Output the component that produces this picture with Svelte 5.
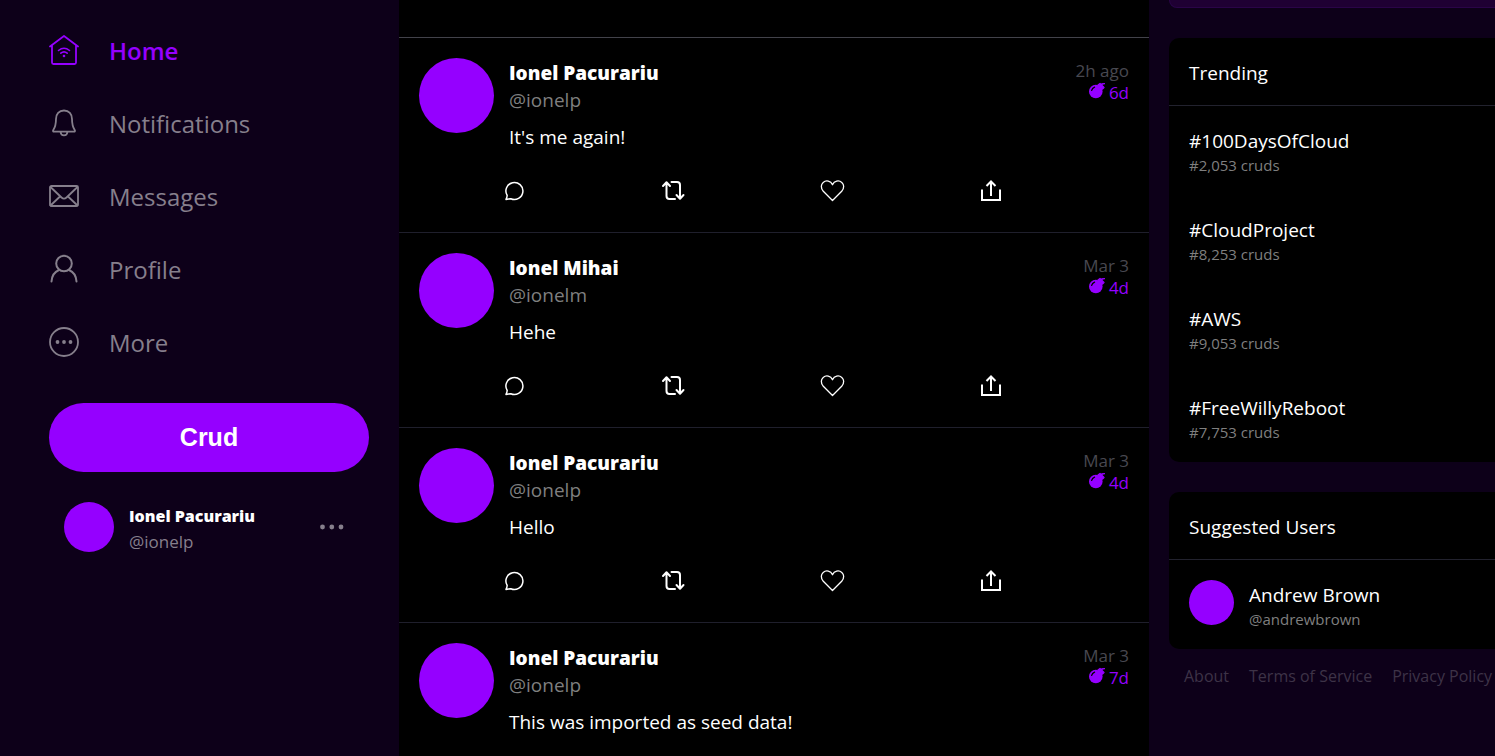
<script>
  const nav = [
    { id: 'home', label: 'Home' },
    { id: 'bell', label: 'Notifications' },
    { id: 'mail', label: 'Messages' },
    { id: 'user', label: 'Profile' },
    { id: 'more', label: 'More' }
  ];
  const posts = [
    { name: 'Ionel Pacurariu', handle: '@ionelp', text: "It's me again!", time: '2h ago', left: '6d' },
    { name: 'Ionel Mihai', handle: '@ionelm', text: 'Hehe', time: 'Mar 3', left: '4d' },
    { name: 'Ionel Pacurariu', handle: '@ionelp', text: 'Hello', time: 'Mar 3', left: '4d' },
    { name: 'Ionel Pacurariu', handle: '@ionelp', text: 'This was imported as seed data!', time: 'Mar 3', left: '7d' }
  ];
  const actions = ['reply', 'repost', 'like', 'share'];
  const trends = [
    { tag: '#100DaysOfCloud', count: '#2,053 cruds' },
    { tag: '#CloudProject', count: '#8,253 cruds' },
    { tag: '#AWS', count: '#9,053 cruds' },
    { tag: '#FreeWillyReboot', count: '#7,753 cruds' }
  ];
</script>

<div class="page">
  <aside class="sidebar">
    <nav>
      {#each nav as item}
        <a href="#{item.id}" class:active={item.id === 'home'}>
          <svg width="30" height="30" viewBox="0 0 30 30" fill="none" stroke="currentColor" stroke-width="2" stroke-linecap="round" stroke-linejoin="round" aria-hidden="true">
            {#if item.id === 'home'}
              <path stroke-width="1.800" d="M1 11.500 15 1l14 10.500M3 10v17.500Q3 29 4.500 29h21q1.500 0 1.500-1.500V10" />
              <path stroke-width="1.600" d="M9.500 15.500q5.500-4.500 11 0M11.800 18.200q3.200-2.600 6.400 0" />
              <circle cx="15" cy="21" r="1.300" fill="currentColor" stroke="none" />
            {:else if item.id === 'bell'}
              <path stroke-width="1.800" d="M15 2.500c-5 0-8 3.700-8 8.500 0 6-1 8.500-2.700 11-.6 1-.2 1.700.8 1.700h19.800c1 0 1.400-.7.8-1.700C24 19.500 23 17 23 11 23 6.200 20 2.500 15 2.500zM11.500 24c.3 2.400 1.700 3.400 3.500 3.400s3.200-1 3.500-3.400" />
            {:else if item.id === 'mail'}
              <rect x="1" y="5" width="28" height="20" rx="1.500" stroke-width="1.800" />
              <path stroke-width="1.800" d="m1.500 6 11 10.500q2.500 2.300 5 0L28.500 6M1.500 24.500l9.500-9M28.500 24.500l-9.500-9" />
            {:else if item.id === 'user'}
              <circle cx="15" cy="9.500" r="7.800" />
              <path d="M2.500 27.500c.4-6.200 3.200-9.700 7.500-11.500M27.500 27.500c-.4-6.200-3.200-9.700-7.500-11.500" />
            {:else}
              <circle cx="15" cy="15" r="14" stroke-width="1.800" />
              <g fill="currentColor" stroke="none"><circle cx="8.500" cy="15" r="1.900" /><circle cx="15" cy="15" r="1.900" /><circle cx="21.500" cy="15" r="1.900" /></g>
            {/if}
          </svg>
          <span>{item.label}</span>
        </a>
      {/each}
    </nav>
    <button class="compose">Crud</button>
    <div class="account">
      <span class="avatar small"></span>
      <div class="who">
        <strong>Ionel Pacurariu</strong>
        <span>@ionelp</span>
      </div>
      <button class="icon" aria-label="Account options">
        <svg width="24" height="6" viewBox="0 0 24 6" fill="currentColor" aria-hidden="true"><circle cx="2.500" cy="3" r="2.400" /><circle cx="11.800" cy="3" r="2.400" /><circle cx="21" cy="3" r="2.400" /></svg>
      </button>
    </div>
  </aside>

  <main>
    {#each posts as post}
      <article>
        <header>
          <span class="avatar"></span>
          <div class="body">
            <strong>{post.name}</strong>
            <span class="handle">{post.handle}</span>
            <p>{post.text}</p>
          </div>
          <div class="meta">
            <time>{post.time}</time>
            <span class="expires">
              <svg width="18" height="17" viewBox="0 0 18 17" aria-hidden="true">
                <circle cx="7.800" cy="9.500" r="6.800" fill="currentColor" />
                <path d="m10 3 2-1.500 4 4L14.500 7zM12.600 3.500l1.200-1.700 3.200-.2" fill="currentColor" stroke="currentColor" stroke-width="1.300" stroke-linejoin="round" />
                <path d="M3.600 8.500Q4.200 6 6.600 5.100" fill="none" stroke="#000" stroke-width="1.200" stroke-linecap="round" />
              </svg>
              {post.left}
            </span>
          </div>
        </header>
        <div class="actions">
          {#each actions as action}
            <button class="icon" aria-label={action}>
              <svg width="25" height="25" viewBox="0 0 25 25" fill="none" stroke="currentColor" stroke-linecap="round" stroke-linejoin="round" aria-hidden="true">
                {#if action === 'reply'}
                  <path stroke-width="1.500" d="M5.200 17.500A8.500 8.500 0 1 1 8.800 20.700L4 21.400Q5 19.500 5.200 17.500z" />
                {:else if action === 'repost'}
                  <path stroke-width="2" d="M2 8 5.500 4.300 9 8M5.500 5v13q0 3 3 3H14M10.500 4H16q3 0 3 3v13M15.500 17l3.500 3.700 3.500-3.700" />
                {:else if action === 'like'}
                  <path stroke-width="1.300" d="M12.500 22.500 3.300 13.200C.4 10 1 6.300 3.200 4.400 6.200 1.800 10.700 2.700 12.500 6.700 14.300 2.700 18.800 1.800 21.800 4.400 24 6.300 24.600 10 21.700 13.200z" />
                {:else}
                  <path stroke-width="2" stroke-linecap="butt" stroke-linejoin="miter" d="M4 11.500V22h18V11.500M13 18V4M8.500 8 13 3.500 17.500 8" />
                {/if}
              </svg>
            </button>
          {/each}
        </div>
      </article>
    {/each}
  </main>

  <aside class="right">
    <div class="search"></div>
    <section class="card">
      <h2>Trending</h2>
      {#each trends as trend}
        <a class="trend" href="#trend">
          <span>{trend.tag}</span>
          <small>{trend.count}</small>
        </a>
      {/each}
    </section>
    <section class="card">
      <h2>Suggested Users</h2>
      <div class="suggested">
        <span class="avatar medium"></span>
        <div>
          <span>Andrew Brown</span>
          <small>@andrewbrown</small>
        </div>
      </div>
    </section>
    <footer>
      <a href="#about">About</a>
      <a href="#terms">Terms of Service</a>
      <a href="#privacy">Privacy Policy</a>
    </footer>
  </aside>
</div>

<style>
  :global(body) {
    background: #0d0019;
    overflow: hidden;
  }
  .page {
    display: grid;
    grid-template-columns: 399px minmax(750px, 2fr) minmax(375px, 1fr);
    height: 100vh;
    overflow: hidden;
    color: #fff;
    font: 19px/27px "Segoe UI", "Open Sans", sans-serif;
  }
  a {
    color: inherit;
    text-decoration: none;
  }
  strong {
    font-weight: 800;
  }
  button {
    border: 0;
    cursor: pointer;
  }
  .icon {
    display: flex;
    padding: 8px;
    background: none;
    color: inherit;
  }
  .avatar {
    flex: none;
    width: 75px;
    height: 75px;
    border-radius: 50%;
    background: #9500ff;
  }
  .avatar.small {
    width: 50px;
    height: 50px;
  }
  .avatar.medium {
    width: 45px;
    height: 45px;
  }

  .sidebar {
    padding: 14px 30px 0 49px;
  }
  nav a {
    display: flex;
    align-items: center;
    gap: 30px;
    height: 73px;
    color: #867f8c;
    font-size: 24px;
  }
  nav svg {
    margin-bottom: 2px;
  }
  nav a.active {
    color: #9500ff;
    font-weight: 600;
  }
  .compose {
    width: 100%;
    height: 69px;
    margin-top: 24px;
    border-radius: 35px;
    background: #9500ff;
    color: #fff;
    font: bold 25px "Liberation Sans", Arial, sans-serif;
  }
  .account {
    display: flex;
    align-items: center;
    gap: 15px;
    margin-top: 30px;
    padding: 0 17px 0 15px;
    color: #867f8c;
    font-size: 17px;
    line-height: 25px;
  }
  .who {
    display: flex;
    flex: 1;
    flex-direction: column;
    padding-top: 2px;
    margin-bottom: -2px;
    white-space: nowrap;
  }
  .who strong {
    color: #fff;
    font-size: 16px;
  }

  main {
    padding-top: 37px;
    background: #000;
  }
  article {
    padding: 20px 20px 21px;
    border-top: 1px solid #1f1f2c;
  }
  article:first-child {
    border-top-color: #42424a;
  }
  header {
    display: flex;
    gap: 15px;
  }
  .body {
    display: flex;
    flex: 1;
    flex-direction: column;
    padding-top: 2px;
  }
  .handle {
    color: #7f7f7f;
  }
  p {
    margin: 10px 0 0;
  }
  .meta {
    display: flex;
    flex-direction: column;
    align-items: flex-end;
    padding-top: 2px;
    color: #484850;
    font-size: 17px;
    line-height: 22px;
  }
  .expires {
    display: flex;
    gap: 3px;
    color: #9500ff;
  }
  .actions {
    display: grid;
    grid-template-columns: repeat(4, 1fr);
    justify-items: start;
    padding: 19px 0 0 75px;
  }

  .right {
    display: flex;
    flex-direction: column;
    gap: 30px;
    padding-left: 20px;
  }
  .search {
    box-sizing: border-box;
    height: 8px;
    border: 1px solid #2a0448;
    border-top: 0;
    border-radius: 0 0 10px 10px;
    background: #1f0033;
  }
  .card {
    border-radius: 10px;
    background: #000;
  }
  h2 {
    margin: 0;
    padding: 22px 20px 18px;
    border-bottom: 1px solid #22222e;
    font-size: 19px;
    font-weight: 400;
    line-height: 27px;
  }
  .trend {
    display: block;
    padding: 21px 20px 20px;
  }
  .trend span,
  small,
  .suggested div span {
    display: block;
  }
  .trend span,
  .suggested div span {
    line-height: 29px;
  }
  small {
    color: #7f7f7f;
    font-size: 15px;
    line-height: 19px;
  }
  .suggested {
    display: flex;
    gap: 15px;
    padding: 20px;
  }
  .suggested div {
    padding-top: 1px;
  }
  footer {
    display: flex;
    gap: 20px;
    margin-top: -16px;
    padding-left: 15px;
    color: #3d3347;
    font-size: 16px;
    white-space: nowrap;
  }
</style>
